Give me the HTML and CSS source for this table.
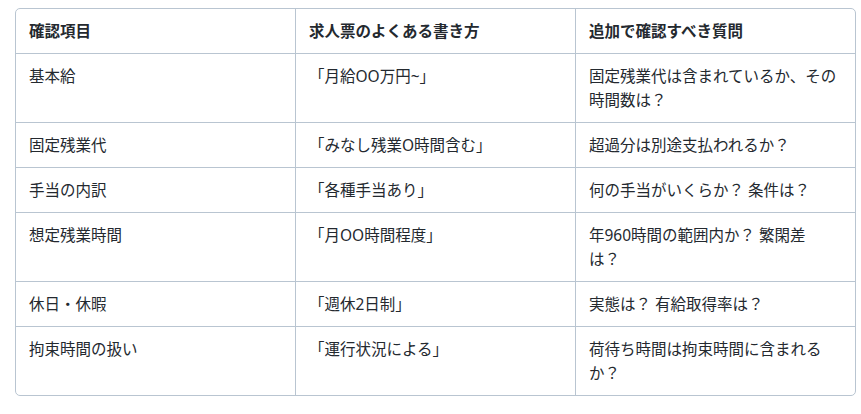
FILE: index.html
```html
<!DOCTYPE html>
<html lang="ja">
<head>
<meta charset="utf-8">
<title>確認項目</title>
<link rel="stylesheet" href="styles.css">
</head>
<body>
<div class="table-wrap">
  <table class="check-table">
    <thead>
      <tr>
        <th>確認項目</th>
        <th>求人票のよくある書き方</th>
        <th>追加で確認すべき質問</th>
      </tr>
    </thead>
    <tbody>
      <tr>
        <td>基本給</td>
        <td>「月給OO万円~」</td>
        <td>固定残業代は含まれているか、その時間数は？</td>
      </tr>
      <tr>
        <td>固定残業代</td>
        <td>「みなし残業O時間含む」</td>
        <td>超過分は別途支払われるか？</td>
      </tr>
      <tr>
        <td>手当の内訳</td>
        <td>「各種手当あり」</td>
        <td>何の手当がいくらか？ 条件は？</td>
      </tr>
      <tr>
        <td>想定残業時間</td>
        <td>「月OO時間程度」</td>
        <td>年960時間の範囲内か？ 繁閑差<br>は？</td>
      </tr>
      <tr>
        <td>休日・休暇</td>
        <td>「週休2日制」</td>
        <td>実態は？ 有給取得率は？</td>
      </tr>
      <tr>
        <td>拘束時間の扱い</td>
        <td>「運行状況による」</td>
        <td>荷待ち時間は拘束時間に含まれるか？</td>
      </tr>
    </tbody>
  </table>
</div>
</body>
</html>
```
FILE: styles.css
```css
html, body {
  margin: 0;
  padding: 0;
  background: #ffffff;
}

body {
  font-family: "Noto Sans", "Noto Sans CJK JP", sans-serif;
  font-size: 15.5px;
  line-height: 24px;
  color: #24292f;
}

.table-wrap {
  margin: 8px 5px 0 15px;
  border: 1px solid #b9c5d1;
  border-radius: 5px;
  overflow: hidden;
}

.check-table {
  width: 100%;
  border-collapse: collapse;
  table-layout: fixed;
}

.check-table th,
.check-table td {
  padding: 10px 12px 10px 13px;
  text-align: left;
  vertical-align: top;
  border-right: 1px solid #b9c5d1;
  border-bottom: 1px solid #b9c5d1;
  width: 33.333%;
}

.check-table th {
  font-weight: 700;
}

.check-table th:last-child,
.check-table td:last-child {
  border-right: none;
}

.check-table tbody tr:last-child td {
  border-bottom: none;
}
```
